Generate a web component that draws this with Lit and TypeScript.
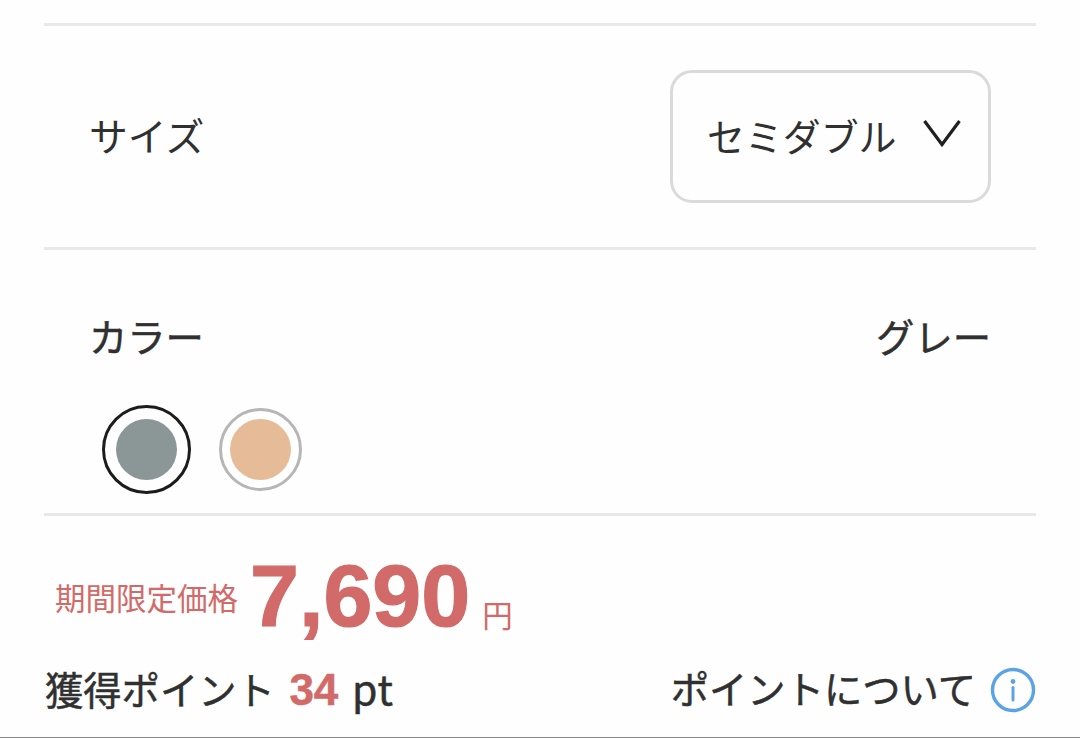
import { LitElement, html, css } from "lit";
import { customElement } from "lit/decorators.js";
import { classMap } from "lit/directives/class-map.js";

const colors = [
  { name: "グレー", tone: "gray", selected: true },
  { name: "ベージュ", tone: "beige", selected: false },
];

@customElement("app-root")
export class AppRoot extends LitElement {
  static styles = css`
    :host {
      display: block;
      box-sizing: border-box;
      height: 738px;
      overflow: hidden;
      padding: 23px 44px 0;
      background: #fefefe;
      border-bottom: 1px solid #858585;
      color: #303030;
      font-family: "Noto Sans CJK JP", sans-serif;
      font-size: 38.3px;
      line-height: 56px;
      white-space: nowrap;
    }
    .row, .color-head, .points, .select, .swatches, .price, .about, .swatch {
      display: flex;
      align-items: center;
    }
    .row, .color {
      box-sizing: border-box;
      border-top: 3px solid #e8e8e8;
    }
    .row {
      height: 224px;
      padding: 0 45px;
      justify-content: space-between;
    }
    .label { margin-bottom: 6px; font-size: 38.8px; }
    .select {
      box-sizing: border-box;
      width: 321px;
      height: 133px;
      padding: 0 27px 0 34px;
      border: 3px solid #dadada;
      border-radius: 22px;
      justify-content: space-between;
    }
    .value { font-size: 37.9px; margin-bottom: 3px; }
    .chevron { width: 38px; height: 28px; margin-top: -5px; }
    .color {
      height: 269px;
      padding: 58px 45px 0;
      border-bottom: 3px solid #e8e8e8;
    }
    .color-head { justify-content: space-between; }
    .medium { -webkit-text-stroke: 0.5px currentColor; }
    .swatches { gap: 28px; margin: 41px 0 0 13px; height: 89px; }
    .swatch {
      box-sizing: border-box;
      justify-content: center;
      width: 83px;
      height: 83px;
      border: 3px solid #b6b6b6;
      border-radius: 50%;
    }
    .swatch.selected { width: 89px; height: 89px; border: 3px solid #1c1c1c; }
    .fill { width: 61px; height: 61px; border-radius: 50%; }
    .gray { background: #8b9696; }
    .beige { background: #e6bc98; }
    .price {
      height: 128px;
      padding-left: 11px;
      align-items: flex-start;
      color: #d16a68;
    }
    .price-label { font-size: 30.5px; margin-top: 53px; }
    .amount {
      font: bold 88px/100px "Liberation Sans", Arial, sans-serif;
      -webkit-text-stroke: 1.2px currentColor;
      margin: 30px 0 0 12px;
    }
    .yen { font-size: 30.5px; margin: 70px 0 0 12px; }
    .points { height: 92px; justify-content: space-between; }
    .earned { margin: -2px 0 0 1px; }
    .count {
      margin: 0 5px 0 6px;
      color: #d16a68;
      font: bold 44px/56px "Liberation Sans", Arial, sans-serif;
    }
    .unit { font-size: 41px; line-height: 40px; letter-spacing: 1px; }
    .about { gap: 14px; }
    .about-label { margin-bottom: 4px; }
    .info { width: 46px; height: 46px; }
  `;

  render() {
    return html`
      <div class="row">
        <span class="label">サイズ</span>
        <div class="select">
          <span class="value">セミダブル</span>
          <svg class="chevron" viewBox="0 0 38 28" fill="none" stroke="#202020" stroke-width="3.2">
            <path d="M1.5 1 L19 24.5 L36.5 1" />
          </svg>
        </div>
      </div>
      <div class="color">
        <div class="color-head medium"><span>カラー</span><span>グレー</span></div>
        <div class="swatches">
          ${colors.map(
            (c) => html`<div class=${classMap({ swatch: true, selected: c.selected })}>
              <div class="fill ${c.tone}"></div>
            </div>`
          )}
        </div>
      </div>
      <div class="price">
        <span class="price-label">期間限定価格</span>
        <span class="amount">7,690</span>
        <span class="yen">円</span>
      </div>
      <div class="points">
        <div class="earned medium">獲得ポイント <span class="count">34</span> <span class="unit">pt</span></div>
        <div class="about medium">
          <span class="about-label">ポイントについて</span>
          <svg class="info" viewBox="0 0 46 46" fill="none" stroke="#5ca3e6">
            <circle cx="23" cy="23" r="20.5" stroke-width="3.4" />
            <circle cx="23" cy="14.5" r="2.4" fill="#5ca3e6" stroke="none" />
            <path d="M23 20.5V33" stroke-width="3" stroke-linecap="round" />
          </svg>
        </div>
      </div>
    `;
  }
}
